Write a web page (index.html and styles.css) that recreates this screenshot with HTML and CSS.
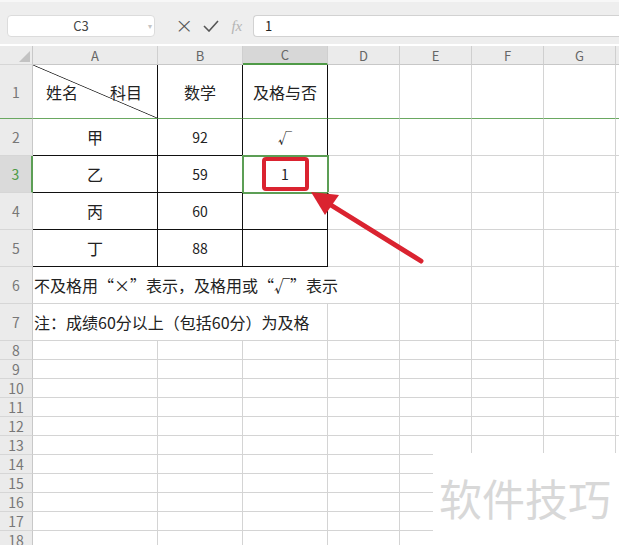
FILE: index.html
```html
<!DOCTYPE html>
<html lang="zh-CN">
<head>
    <meta charset="UTF-8">
    <title>表格</title>
    <link rel="stylesheet" href="styles.css">
</head>
<body>

    <!-- 编辑栏 -->
    <div class="toolbar">
        <div class="name-box">C3<span class="drop">&#9662;</span></div>
        <div class="tools">
            <span class="tool-x">&#215;</span>
            <svg class="tool-ok" width="16" height="12" viewBox="0 0 16 12"><path d="M1 6 L6 11 L15 1" fill="none" stroke="#555" stroke-width="1.6"/></svg>
            <span class="tool-fx">fx</span>
        </div>
        <div class="formula">1</div>
    </div>

    <!-- 表格 -->
    <div class="sheet">
        <div class="row head">
            <div class="rh corner"><svg width="11" height="11" viewBox="0 0 11 11"><path d="M11 0 L11 11 L0 11 Z" fill="#c2c2c2"/></svg></div>
            <div class="c a">A</div>
            <div class="c b">B</div>
            <div class="c cc sel">C</div>
            <div class="c d">D</div>
            <div class="c d">E</div>
            <div class="c d">F</div>
            <div class="c d">G</div>
            <div class="c rest"></div>
        </div>
        <div class="row r1 freeze">
            <div class="rh">1</div>
            <div class="c a box diag"><span>姓名</span><span>科目</span></div>
            <div class="c b box">数学</div>
            <div class="c cc box">及格与否</div>
            <div class="c d"></div><div class="c d"></div><div class="c d"></div><div class="c d"></div><div class="c rest"></div>
        </div>
        <div class="row r2">
            <div class="rh">2</div>
            <div class="c a box">甲</div>
            <div class="c b box num">92</div>
            <div class="c cc box num">&#8730;</div>
            <div class="c d"></div><div class="c d"></div><div class="c d"></div><div class="c d"></div><div class="c rest"></div>
        </div>
        <div class="row r2">
            <div class="rh active">3</div>
            <div class="c a box">乙</div>
            <div class="c b box num">59</div>
            <div class="c cc box num current">1</div>
            <div class="c d"></div><div class="c d"></div><div class="c d"></div><div class="c d"></div><div class="c rest"></div>
        </div>
        <div class="row r2">
            <div class="rh">4</div>
            <div class="c a box">丙</div>
            <div class="c b box num">60</div>
            <div class="c cc box"></div>
            <div class="c d"></div><div class="c d"></div><div class="c d"></div><div class="c d"></div><div class="c rest"></div>
        </div>
        <div class="row r2">
            <div class="rh">5</div>
            <div class="c a box">丁</div>
            <div class="c b box num">88</div>
            <div class="c cc box"></div>
            <div class="c d"></div><div class="c d"></div><div class="c d"></div><div class="c d"></div><div class="c rest"></div>
        </div>
        <div class="row r2">
            <div class="rh">6</div>
            <div class="c note">不及格用“×”表示，及格用或“√”表示</div>
            <div class="c d"></div><div class="c d"></div><div class="c d"></div><div class="c d"></div><div class="c rest"></div>
        </div>
        <div class="row r2">
            <div class="rh">7</div>
            <div class="c note short">注：成绩60分以上（包括60分）为及格</div>
            <div class="c cc"></div>
            <div class="c d"></div><div class="c d"></div><div class="c d"></div><div class="c d"></div><div class="c rest"></div>
        </div>
        <div class="row sm"><div class="rh">8</div><div class="c a"></div><div class="c b"></div><div class="c cc"></div><div class="c d"></div><div class="c d"></div><div class="c d"></div><div class="c d"></div><div class="c rest"></div></div>
        <div class="row sm"><div class="rh">9</div><div class="c a"></div><div class="c b"></div><div class="c cc"></div><div class="c d"></div><div class="c d"></div><div class="c d"></div><div class="c d"></div><div class="c rest"></div></div>
        <div class="row sm"><div class="rh">10</div><div class="c a"></div><div class="c b"></div><div class="c cc"></div><div class="c d"></div><div class="c d"></div><div class="c d"></div><div class="c d"></div><div class="c rest"></div></div>
        <div class="row sm"><div class="rh">11</div><div class="c a"></div><div class="c b"></div><div class="c cc"></div><div class="c d"></div><div class="c d"></div><div class="c d"></div><div class="c d"></div><div class="c rest"></div></div>
        <div class="row sm"><div class="rh">12</div><div class="c a"></div><div class="c b"></div><div class="c cc"></div><div class="c d"></div><div class="c d"></div><div class="c d"></div><div class="c d"></div><div class="c rest"></div></div>
        <div class="row sm"><div class="rh">13</div><div class="c a"></div><div class="c b"></div><div class="c cc"></div><div class="c d"></div><div class="c d"></div><div class="c d"></div><div class="c d"></div><div class="c rest"></div></div>
        <div class="row sm"><div class="rh">14</div><div class="c a"></div><div class="c b"></div><div class="c cc"></div><div class="c d"></div><div class="c d"></div><div class="c d"></div><div class="c d"></div><div class="c rest"></div></div>
        <div class="row sm"><div class="rh">15</div><div class="c a"></div><div class="c b"></div><div class="c cc"></div><div class="c d"></div><div class="c d"></div><div class="c d"></div><div class="c d"></div><div class="c rest"></div></div>
        <div class="row sm"><div class="rh">16</div><div class="c a"></div><div class="c b"></div><div class="c cc"></div><div class="c d"></div><div class="c d"></div><div class="c d"></div><div class="c d"></div><div class="c rest"></div></div>
        <div class="row sm"><div class="rh">17</div><div class="c a"></div><div class="c b"></div><div class="c cc"></div><div class="c d"></div><div class="c d"></div><div class="c d"></div><div class="c d"></div><div class="c rest"></div></div>
        <div class="row sm"><div class="rh">18</div><div class="c a"></div><div class="c b"></div><div class="c cc"></div><div class="c d"></div><div class="c d"></div><div class="c d"></div><div class="c d"></div><div class="c rest"></div></div>
    </div>

    <!-- 标注 -->
    <svg class="marks" width="619" height="545" viewBox="0 0 619 545">
        <rect x="264" y="159" width="43" height="30" rx="2" fill="none" stroke="#da2330" stroke-width="4"/>
        <line x1="421" y1="261" x2="326" y2="202" stroke="#da2330" stroke-width="5" stroke-linecap="round"/>
        <polygon points="311,192 325,215 339,195" fill="#da2330"/>
    </svg>

    <div class="watermark">软件技巧</div>

</body>
</html>
```

FILE: styles.css
```css
body {
    margin: 0;
    width: 619px;
    height: 545px;
    overflow: hidden;
    position: relative;
    background: #fff;
    font-family: "Noto Sans CJK SC", sans-serif;
    color: #222;
}

/* 编辑栏 */
.toolbar {
    height: 44px;
    border-top: 2px solid #f7f7f7;
    background: #eeeeee;
    display: flex;
    align-items: flex-start;
    padding-top: 13px;
    box-sizing: border-box;
}
.name-box {
    margin-left: 7px;
    width: 148px;
    height: 22px;
    box-sizing: border-box;
    background: #fff;
    border: 1px solid #dcdcdc;
    border-radius: 4px;
    font-size: 13px;
    color: #444;
    text-align: center;
    line-height: 20px;
    position: relative;
}
.name-box .drop {
    position: absolute;
    right: 2px;
    top: 0;
    font-size: 8px;
    color: #c4c4c4;
}
.tools {
    width: 98px;
    height: 22px;
    display: flex;
    align-items: center;
    padding-left: 20px;
    box-sizing: border-box;
}
.tool-x {
    font-size: 22px;
    color: #555;
    line-height: 22px;
    font-family: "DejaVu Sans", sans-serif;
    font-weight: 300;
}
.tool-ok {
    margin-left: 10px;
}
.tool-fx {
    margin-left: 12px;
    font-family: "Liberation Serif", serif;
    font-style: italic;
    font-size: 15px;
    color: #b4b4b4;
}
.formula {
    flex: 1;
    height: 22px;
    box-sizing: border-box;
    background: #fff;
    border: 1px solid #d2d2d2;
    border-right: none;
    border-radius: 4px 0 0 4px;
    font-size: 13px;
    line-height: 20px;
    padding-left: 11px;
}

/* 表格 */
.sheet {
    margin-top: 2px;
}
.row {
    display: flex;
    height: 37px;
}
.row.head {
    height: 19px;
    background: #ebebeb;
}
.row.r1 {
    height: 54px;
}
.row.sm {
    height: 19px;
}
.rh {
    width: 33px;
    flex: none;
    box-sizing: border-box;
    background: #ebebeb;
    border-right: 1px solid #c8c8c8;
    border-bottom: 1px solid #d6d6d6;
    color: #777;
    font-size: 14px;
    display: flex;
    align-items: center;
    justify-content: center;
}
.rh.corner {
    align-items: flex-end;
    justify-content: flex-end;
    padding: 0 2px 2px 0;
}
.rh.active {
    background: #dadada;
    color: #4e9a47;
    border-right: 2px solid #5c9e55;
}
.c {
    flex: none;
    box-sizing: border-box;
    border-right: 1px solid #d4d4d4;
    border-bottom: 1px solid #d4d4d4;
    display: flex;
    align-items: center;
    justify-content: center;
    font-size: 16px;
    position: relative;
}
.head .c {
    border-right-color: #cfcfcf;
    border-bottom-color: #c8c8c8;
    color: #666;
    font-size: 13px;
    background: #ebebeb;
}
.head .c.sel {
    background: #d7d7d7;
    border-bottom: 2px solid #4f9a47;
}
.a { width: 125px; }
.b { width: 85px; }
.cc { width: 85px; }
.d { width: 72px; }
.rest { flex: 1; border-right: none; }

.c.box {
    border-right-color: #111;
    border-bottom-color: #111;
}
.num {
    font-size: 14px;
}
.freeze .c,
.freeze .rh,
.freeze .c.box {
    border-bottom-color: #6aa861;
}
.diag {
    justify-content: space-between;
    padding: 0 15px 0 13px;
    background: linear-gradient(to top right, transparent calc(50% - 0.8px), #333 50%, transparent calc(50% + 0.8px));
}
.current {
    outline: 2px solid #5c9e55;
    outline-offset: -1px;
}
.note {
    width: 295px;
    justify-content: flex-start;
    padding-left: 1px;
    white-space: nowrap;
    overflow: visible;
    border-right: none;
    z-index: 1;
}
.note.short {
    width: 210px;
}

/* 标注 */
.marks {
    position: absolute;
    left: 0;
    top: 0;
    pointer-events: none;
    z-index: 2;
}
.watermark {
    position: absolute;
    left: 433px;
    top: 453px;
    width: 186px;
    height: 92px;
    background: #fff;
    color: #d8d8d8;
    font-size: 43px;
    padding-left: 6px;
    box-sizing: border-box;
    line-height: 88px;
    letter-spacing: 0;
    z-index: 3;
}
```
